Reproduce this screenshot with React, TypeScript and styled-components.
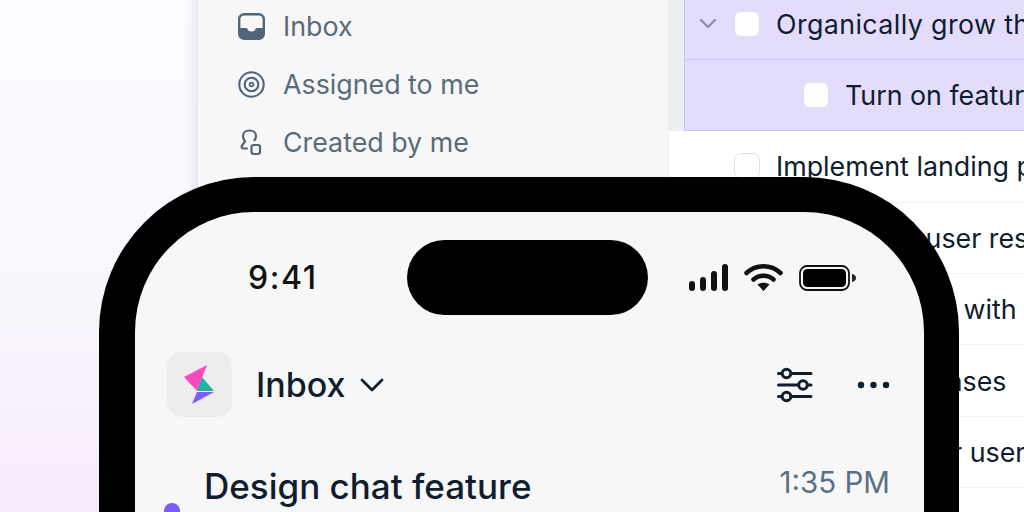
import styled, { createGlobalStyle } from "styled-components";

const GlobalStyle = createGlobalStyle`
  html, body {
    margin: 0;
    padding: 0;
    height: 512px;
    overflow: hidden;
    font-family: Inter, "Liberation Sans", sans-serif;
  }
`;

const Page = styled.div`
  position: relative;
  width: 1024px;
  height: 512px;
  overflow: hidden;
  padding-left: 198px;
  box-sizing: border-box;
  background: linear-gradient(180deg, #fbfbff 0%, #f8f8fd 50%, #f8eafc 100%);
`;

const Window = styled.div`
  display: flex;
  margin-top: -11.6px;
  width: 900px;
  height: 620px;
  background: #fff;
  box-shadow: -2px 0 12px rgba(80, 80, 120, 0.16);
`;

const Sidebar = styled.nav`
  flex: none;
  display: flex;
  flex-direction: column;
  width: 471px;
  padding: 8.6px 0 0 40px;
  box-sizing: border-box;
  background: #f7f7f7;
  border-right: 1px solid #eeeeee;
`;

const NavItem = styled.div`
  display: flex;
  align-items: center;
  gap: 18px;
  height: 58px;
  font-size: 26.8px;
  color: #5a6b7b;
  svg {
    flex: none;
  }
`;

const Main = styled.main`
  flex: 1;
  min-width: 0;
  display: flex;
  flex-direction: column;
`;

const SelectedGroup = styled.div`
  padding-left: 15px;
  background: #ebeff0;
`;

const Row = styled.div<{ $selected?: boolean; $indent?: number; $tracking?: number }>`
  display: flex;
  align-items: center;
  height: 71.4px;
  box-sizing: border-box;
  padding-left: ${(p) => p.$indent ?? 65}px;
  font-size: 26.8px;
  letter-spacing: ${(p) => p.$tracking ?? 0}px;
  color: #0f1d2e;
  white-space: nowrap;
  background: ${(p) => (p.$selected ? "#e4dcfd" : "#fff")};
  border-bottom: 1.5px solid ${(p) => (p.$selected ? "#cfc5f3" : "#f0f2f4")};
  border-left: ${(p) => (p.$selected ? "1px solid #cfc5f3" : "none")};
`;

const Caret = styled.svg`
  width: 20px;
  height: 12px;
  margin-right: 16px;
  flex: none;
`;

const Check = styled.span`
  flex: none;
  width: 26px;
  height: 26px;
  margin-right: 16px;
  box-sizing: border-box;
  border-radius: 7px;
  background: #fff;
  border: 1.5px solid #e1e1df;
`;

const Phone = styled.div`
  position: absolute;
  left: 99px;
  top: 177px;
  width: 860px;
  height: 520px;
  box-sizing: border-box;
  border: solid #000;
  border-width: 35px 35px 0 36px;
  border-radius: 155px 155px 0 0;
  background: #f7f7f7;
  display: flex;
  flex-direction: column;
`;

const StatusBar = styled.div`
  position: relative;
  display: flex;
  align-items: center;
  justify-content: space-between;
  height: 75px;
  margin-top: 28px;
  padding: 0 67px 0 113px;
`;

const Clock = styled.span`
  font-size: 32px;
  font-weight: 500;
  letter-spacing: 1.6px;
  color: #111;
`;

const Island = styled.div`
  position: absolute;
  left: 272px;
  top: 0;
  width: 241px;
  height: 75px;
  border-radius: 38px;
  background: #000;
`;

const StatusIcons = styled.div`
  display: flex;
  align-items: center;
  gap: 16px;
`;

const AppHeader = styled.header`
  display: flex;
  align-items: center;
  height: 65px;
  margin-top: 37px;
  padding: 0 34px 0 32px;
`;

const LogoTile = styled.div`
  width: 65px;
  height: 65px;
  border-radius: 15px;
  background: #ededed;
  margin-right: 24px;
`;

const InboxTitle = styled.h1`
  margin: 0 14px 0 0;
  font-size: 34px;
  font-weight: 450;
  color: #0f1d2e;
`;

const HeaderActions = styled.div`
  display: flex;
  align-items: center;
  gap: 44px;
  margin-left: auto;
`;

const Thread = styled.div`
  position: relative;
  display: flex;
  align-items: center;
  justify-content: space-between;
  margin-top: 48px;
  padding: 0 34px 0 69px;
`;

const ThreadTitle = styled.span`
  font-size: 35px;
  font-weight: 450;
  color: #0f1d2e;
`;

const ThreadTime = styled.span`
  font-size: 29.5px;
  color: #5b7083;
  margin-top: -9px;
`;

const UnreadDot = styled.span`
  position: absolute;
  left: 29px;
  top: 38px;
  width: 16px;
  height: 16px;
  border-radius: 50%;
  background: #7b5cfa;
`;

const rows = [
  "Implement landing page",
  "Summarize user research",
  "Share designs with",
  "Identify use cases",
  "Contact power users",
];

function RowCaret() {
  return (
    <Caret viewBox="0 0 20 12" fill="none" stroke="#8d93a6" strokeWidth="2.4" strokeLinecap="round" strokeLinejoin="round">
      <path d="M3 2l7 7 7-7" />
    </Caret>
  );
}

export default function App() {
  return (
    <>
      <GlobalStyle />
      <Page>
        <Window>
          <Sidebar>
            <NavItem>
              <svg width="27" height="27" viewBox="0 0 27 27">
                <rect x="1.2" y="1.2" width="24.6" height="24.6" rx="5" fill="none" stroke="#50657a" strokeWidth="2.4" />
                <path d="M1.5 15h6.5c1 0 1.3.6 1.7 1.4.5 1.1 1.4 2 3.8 2s3.3-.9 3.8-2c.4-.8.7-1.4 1.7-1.4h6.5v7c0 2.500-1.500 3.500-3.500 3.500H5c-2 0-3.500-1-3.500-3.500z" fill="#50657a" />
              </svg>
              Inbox
            </NavItem>
            <NavItem>
              <svg width="27" height="27" viewBox="0 0 27 27" fill="none" stroke="#50657a" strokeWidth="2.1">
                <circle cx="13.5" cy="13.5" r="12.2" />
                <circle cx="13.5" cy="13.5" r="6.8" />
                <circle cx="13.5" cy="13.5" r="1.9" strokeWidth="1.8" />
              </svg>
              Assigned to me
            </NavItem>
            <NavItem>
              <svg width="27" height="27" viewBox="0 0 27 27" fill="none" stroke="#50657a" strokeWidth="2.2" strokeLinecap="round" strokeLinejoin="round">
                <path d="M9 19.500H5.500c-1.500 0-2.500-1.500-1.500-3l3-4c-1.500-2-2-3.500-2-5.500 0-3 2.500-5.500 6.500-5.500s6.500 2.500 6.500 5.500c0 1.500-.5 3-1.500 4.200" />
                <rect x="13.500" y="16" width="8.500" height="9" rx="2.200" />
              </svg>
              Created by me
            </NavItem>
          </Sidebar>
          <Main>
            <SelectedGroup>
              <Row $selected $indent={13} $tracking={0.4}>
                <RowCaret />
                <Check />
                Organically grow the audience
              </Row>
              <Row $selected $indent={118}>
                <Check />
                Turn on feature flags
              </Row>
            </SelectedGroup>
            {rows.map((text) => (
              <Row key={text}>
                <Check />
                {text}
              </Row>
            ))}
          </Main>
        </Window>
        <Phone>
          <StatusBar>
            <Clock>9:41</Clock>
            <Island />
            <StatusIcons>
              <svg width="39" height="28" viewBox="0 0 39 28" fill="#111">
                <rect x="0" y="17" width="6" height="10" rx="3" />
                <rect x="11" y="13" width="6" height="14" rx="3" />
                <rect x="22" y="7" width="6" height="20" rx="3" />
                <rect x="33" y="0" width="6" height="27" rx="3" />
              </svg>
              <svg width="39" height="28" viewBox="0 0 39 28">
                <path d="M2.500 9C12 0 27 0 36.500 9" fill="none" stroke="#111" strokeWidth="4.500" strokeLinecap="round" />
                <path d="M9.500 15.500C15 10.500 24 10.500 29.500 15.500" fill="none" stroke="#111" strokeWidth="4.500" strokeLinecap="round" />
                <path d="M13.500 20.500C17 18 22 18 25.500 20.500L19.500 27Z" fill="#111" />
              </svg>
              <svg width="58" height="26" viewBox="0 0 58 26">
                <rect x="1" y="1" width="49" height="24" rx="7" fill="none" stroke="#111" strokeWidth="1.800" />
                <rect x="4" y="4" width="43" height="18" rx="4.500" fill="#000" />
                <path d="M53 9c2.500.5 4 2 4 4s-1.500 3.500-4 4z" fill="#222" />
              </svg>
            </StatusIcons>
          </StatusBar>
          <AppHeader>
            <LogoTile>
              <svg width="65" height="65" viewBox="0 0 65 65">
                <path d="M40 13 17 25 30 39Z" fill="#fb49c0" />
                <path d="M35 25 47 39H30Z" fill="#1db5a6" />
                <path d="M30 40H47L25 52Z" fill="#7b5cfa" />
              </svg>
            </LogoTile>
            <InboxTitle>Inbox</InboxTitle>
            <svg width="26" height="16" viewBox="0 0 26 16" fill="none" stroke="#0f1d2e" strokeWidth="2.800" strokeLinecap="round" strokeLinejoin="round">
              <path d="M3 3l10 10L23 3" />
            </svg>
            <HeaderActions>
              <svg width="36" height="36" viewBox="0 0 36 36" fill="none" stroke="#0f1d2e" strokeWidth="3" strokeLinecap="round">
                <path d="M14 6.500h20M1.500 6.500h3M1.500 18h20M31 18h3M14 29.500h20M1.500 29.500h3" />
                <circle cx="9.500" cy="6.500" r="4.300" />
                <circle cx="26" cy="18" r="4.300" />
                <circle cx="9.500" cy="29.500" r="4.300" />
              </svg>
              <svg width="33" height="8" viewBox="0 0 33 8" fill="#0f1d2e">
                <circle cx="4" cy="4" r="3.200" />
                <circle cx="16.500" cy="4" r="3.200" />
                <circle cx="29" cy="4" r="3.200" />
              </svg>
            </HeaderActions>
          </AppHeader>
          <Thread>
            <UnreadDot />
            <ThreadTitle>Design chat feature</ThreadTitle>
            <ThreadTime>1:35 PM</ThreadTime>
          </Thread>
        </Phone>
      </Page>
    </>
  );
}
